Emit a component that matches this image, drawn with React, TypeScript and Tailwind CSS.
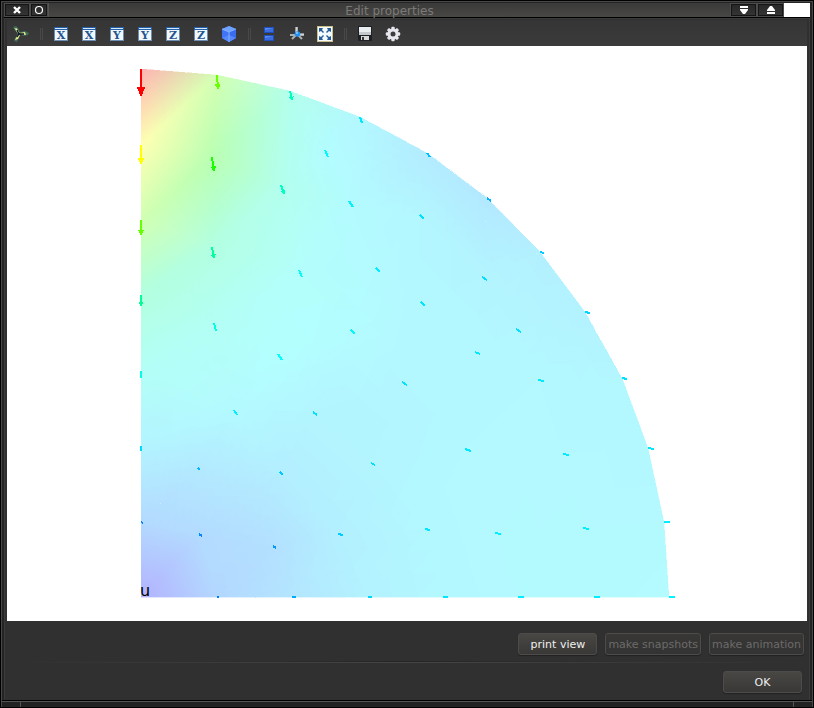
import type { ReactNode } from "react";

type Point = [number, number];
type Triangle = [number, number, number];
type Rgb = [number, number, number];

// Every node: x, y, hue of its magnitude, displacement x, displacement y.
const NODES: [number, number, number, number, number][] = [
  [141, 69, 0, 0, 27], [141, 145, 60, 0, 19], [141, 220, 96, 0, 15], [141, 295, 155, 0, 11],
  [141, 371, 174, 0, 7], [141, 446, 189, 0, 5], [141, 522, 209, 2, 1], [141, 597, 240, 0, 0],
  [217, 75, 95, 1, 14], [290, 91, 165, 2, 9], [360, 117, 186, 2, 6], [427, 153, 195, 3, 4],
  [487, 198, 198, 4, 3], [540, 252, 192, 4, 1], [585, 312, 190, 5, 1], [622, 378, 187, 5, 1],
  [648, 448, 186, 6, 1], [664, 522, 184, 6, 0], [669, 597, 183, 6, 0],
  [217, 597, 211, 2, 0], [292, 597, 200, 4, 0], [368, 597, 190, 4, 0], [443, 597, 186, 5, 0],
  [518, 597, 184, 6, 0], [594, 597, 184, 6, 0],
  [212, 157, 114, 2, 14], [281, 185, 166, 3, 9], [325, 150, 182, 3, 7], [349, 201, 183, 4, 6],
  [212, 247, 157, 2, 11], [299, 270, 177, 3, 7], [376, 268, 184, 4, 4], [420, 215, 187, 4, 4],
  [482, 277, 188, 5, 3], [421, 302, 186, 4, 4], [516, 329, 187, 5, 3], [475, 352, 186, 5, 2],
  [538, 380, 185, 6, 1], [214, 323, 172, 2, 8], [351, 330, 182, 4, 4], [278, 354, 180, 4, 6],
  [234, 410, 184, 3, 5], [313, 412, 188, 4, 3], [198, 468, 197, 2, 2], [280, 472, 193, 3, 3],
  [371, 463, 188, 4, 2], [199, 534, 208, 3, 2], [273, 546, 204, 3, 2], [338, 534, 192, 5, 1],
  [402, 382, 187, 5, 3], [465, 449, 185, 6, 2], [563, 454, 185, 6, 1], [425, 529, 186, 5, 1],
  [495, 533, 184, 6, 1], [583, 528, 184, 6, 1],
];

function hueToRgb(hue: number): Rgb {
  const channel = (n: number) => {
    const k = (n + hue / 60) % 6;
    return 255 * (1 - Math.max(0, Math.min(k, 4 - k, 1)));
  };
  return [channel(5), channel(3), channel(1)];
}

const css = (c: Rgb) => `rgb(${c.map(Math.round).join(",")})`;
const tint = (c: Rgb) => c.map((v) => v * 0.3 + 178.5) as Rgb;

function insideCircumcircle(a: Point, b: Point, c: Point, p: Point) {
  const [ax, ay, bx, by, cx, cy] = [a[0] - p[0], a[1] - p[1], b[0] - p[0], b[1] - p[1], c[0] - p[0], c[1] - p[1]];
  const det =
    (ax * ax + ay * ay) * (bx * cy - cx * by) -
    (bx * bx + by * by) * (ax * cy - cx * ay) +
    (cx * cx + cy * cy) * (ax * by - bx * ay);
  const turn = (b[0] - a[0]) * (c[1] - a[1]) - (b[1] - a[1]) * (c[0] - a[0]);
  return turn > 0 ? det > 0 : det < 0;
}

// Incremental Delaunay triangulation of the nodes.
function triangulate(points: Point[]): Triangle[] {
  const n = points.length;
  const all: Point[] = [...points, [-90000, -80000], [91000, -80000], [400, 120000]];
  let triangles: Triangle[] = [[n, n + 1, n + 2]];
  for (let i = 0; i < n; i++) {
    const edges = new Map<string, [number, number]>();
    triangles = triangles.filter((t) => {
      if (!insideCircumcircle(all[t[0]], all[t[1]], all[t[2]], all[i])) return true;
      for (const [a, b] of [[t[0], t[1]], [t[1], t[2]], [t[2], t[0]]]) {
        const key = a < b ? `${a}-${b}` : `${b}-${a}`;
        if (edges.has(key)) edges.delete(key);
        else edges.set(key, [a, b]);
      }
      return false;
    });
    edges.forEach(([a, b]) => triangles.push([a, b, i]));
  }
  return triangles.filter((t) => t.every((v) => v < n));
}

// Smooth shading: a triangle is cut into cells until each one's colour step is small.
function shadeTriangle(p: Point[], c: Rgb[]): { points: string; fill: string }[] {
  let spread = 0;
  for (let k = 0; k < 3; k++)
    for (let m = 0; m < 3; m++) spread = Math.max(spread, Math.abs(c[0][k] - c[m][k]), Math.abs(c[1][k] - c[2][k]));
  const n = Math.max(2, Math.min(24, Math.ceil(spread / 2)));
  const at = (i: number, j: number): Point => {
    const k = n - i - j;
    return [0, 1].map((d) => (p[0][d] * i + p[1][d] * j + p[2][d] * k) / n) as Point;
  };
  const colour = (i: number, j: number) =>
    css([0, 1, 2].map((d) => (c[0][d] * i + c[1][d] * j + c[2][d] * (n - i - j)) / n) as Rgb);
  const cells: { points: string; fill: string }[] = [];
  for (let i = 0; i < n; i++)
    for (let j = 0; j < n - i; j++) {
      cells.push({ points: [at(i, j), at(i + 1, j), at(i, j + 1)].join(" "), fill: colour(i + 1 / 3, j + 1 / 3) });
      if (i + j < n - 1)
        cells.push({
          points: [at(i + 1, j), at(i + 1, j + 1), at(i, j + 1)].join(" "),
          fill: colour(i + 2 / 3, j + 2 / 3),
        });
    }
  return cells;
}

const POSITIONS = NODES.map(([x, y]) => [x, y] as Point);
const COLOURS = NODES.map((node) => hueToRgb(node[2]));
const CELLS = triangulate(POSITIONS).flatMap((t) =>
  shadeTriangle(t.map((i) => POSITIONS[i]), t.map((i) => tint(COLOURS[i]))),
);

function Arrow({ index }: { index: number }) {
  const [x, y, , dx, dy] = NODES[index];
  const length = Math.hypot(dx, dy);
  if (length === 0) return null;
  const colour = css(COLOURS[index]);
  const [ux, uy] = [dx / length, dy / length];
  const head = length * 0.3;
  const half = length > 9 ? length * 0.1 + 0.7 : 0;
  const [bx, by] = [x + dx - ux * head, y + dy - uy * head];
  return (
    <g fill={colour} stroke={colour}>
      <line x1={x} y1={y} x2={half ? bx : x + dx} y2={half ? by : y + dy} strokeWidth="2" />
      {half > 0 && (
        <polygon
          strokeWidth="1"
          points={`${x + dx},${y + dy} ${bx - uy * half},${by + ux * half} ${bx + uy * half},${by - ux * half}`}
        />
      )}
    </g>
  );
}

function FieldPlot() {
  return (
    <svg viewBox="7 46 800 575" className="block h-auto w-full bg-white" role="img" aria-label="u">
      <g shapeRendering="crispEdges">
        {CELLS.map((cell, i) => (
          <polygon key={i} points={cell.points} fill={cell.fill} stroke={cell.fill} strokeWidth="0.4" />
        ))}
        {NODES.map((_, i) => (
          <Arrow key={i} index={i} />
        ))}
      </g>
      <text x="140" y="596" fontSize="16" fontFamily="DejaVu Sans, sans-serif">
        u
      </text>
    </svg>
  );
}

function Icon({ children }: { children: ReactNode }) {
  return (
    <svg viewBox="0 0 16 16" className="size-4" aria-hidden="true">
      {children}
    </svg>
  );
}

function AxisIcon({ letter }: { letter: string }) {
  return (
    <Icon>
      <rect x="1" y="1" width="14" height="14" fill="#6d8db5" />
      <rect x="1" y="1" width="14" height="3" fill="#245fa8" />
      <rect x="2" y="2" width="12" height="1" fill="#d5e9fa" />
      <rect x="2" y="4" width="12" height="10" fill="#f1f8fb" />
      <text x="8" y="13" fontSize="11" fontWeight="bold" textAnchor="middle" fill="#245591" fontFamily="DejaVu Serif, serif">
        {letter}
      </text>
    </Icon>
  );
}

function AxesIcon() {
  return (
    <Icon>
      <path d="M0 1 3 0 5 2 7 6 12 5 16 7 15 9 11 10 7 9 5 14 4 16 1 15 2 12 5 8Z" fill="#3f6b57" />
      <path d="M1 2 4 2 6 7 5 8Z" fill="#8fb873" />
      <path d="M7 7 12 6 13 9 7 8Z" fill="#e6ea8a" />
      <path d="M5 9 7 9 5 13 2 14 3 12Z" fill="#e6ea8a" />
      <path d="M3 3 6 7" stroke="#eff3a6" strokeWidth="1.400" />
      <path d="M4 4 6 8 11 8M6 8 4 11" fill="none" stroke="#0b1022" strokeWidth="1.300" />
    </Icon>
  );
}

function CubeIcon() {
  return (
    <Icon>
      <path d="M8 0 15 3 15 12 8 16 1 12 1 3Z" fill="#3f74f4" />
      <path d="M8 0 15 3 8 6 1 3Z" fill="#6fa2ff" />
      <path d="M8 6 15 3 15 12 8 16Z" fill="#3a6cf0" />
      <path d="M1 12 8 9 15 12 8 16Z" fill="#5488fb" />
      <path d="M1 3 8 6 8 16M8 6 15 3" fill="none" stroke="#8fbaff" strokeWidth=".8" />
    </Icon>
  );
}

function SplitIcon() {
  return (
    <Icon>
      {[1, 9].map((y) => (
        <g key={y}>
          <rect x="3" y={y} width="10" height="6" fill="#1f4fbe" />
          <rect x="4" y={y + 1} width="8" height="4" fill="#5b8aef" />
          <path d={`M4 ${y + 5}V${y + 3}L12 ${y + 1}V${y + 5}Z`} fill="#3a6ce0" />
        </g>
      ))}
    </Icon>
  );
}

function OriginIcon() {
  return (
    <Icon>
      <path d="M8 1V8L3 13M8 8 13 13M1 9H15" fill="none" stroke="#a9b0b3" strokeWidth="2" />
      <path d="M7 1V7M10 8H15" stroke="#f2f4f4" strokeWidth="1" />
      <circle cx="8.500" cy="8" r="2.800" fill="#2590f0" />
      <circle cx="8" cy="7" r="1" fill="#8ed1ff" />
    </Icon>
  );
}

function FitIcon() {
  return (
    <Icon>
      <rect x="0" y="0" width="16" height="16" fill="#c9c08d" />
      <rect x="1" y="1" width="14" height="14" fill="#f5fafd" />
      <path
        d="M2 2H6L5 4 7 6 6 7 4 5 2 6ZM14 2V6L12 5 10 7 9 6 11 4 10 2ZM2 14V10L4 11 6 9 7 10 5 12 6 14ZM14 14H10L11 12 9 10 10 9 12 11 14 10Z"
        fill="#285d99"
      />
    </Icon>
  );
}

function SaveIcon() {
  return (
    <Icon>
      <path d="M1 0H15V15H2L1 14Z" fill="#1d2126" />
      <path d="M2 1H14V9H2Z" fill="#e8edf0" />
      <path d="M2 6H14V9H2Z" fill="#c3c9cd" />
      <path d="M4 10H12V14H4Z" fill="#d6d9d5" />
      <path d="M5 11H7V14H5Z" fill="#35383a" />
    </Icon>
  );
}

function GearIcon() {
  return (
    <Icon>
      <g fill="#e7e6ef">
        <circle cx="8" cy="8" r="5.500" />
        {[0, 45, 90, 135].map((angle) => (
          <rect key={angle} x="6.300" y="0.800" width="3.400" height="14.400" rx="1" transform={`rotate(${angle} 8 8)`} />
        ))}
      </g>
      <circle cx="8" cy="8" r="2.500" fill="#3b3b3d" />
    </Icon>
  );
}

function Tool({ label, children }: { label: string; children: ReactNode }) {
  return (
    <button type="button" aria-label={label} className="flex h-7 w-7 shrink-0 items-center justify-center">
      {children}
    </button>
  );
}

function Divider() {
  return (
    <span className="flex h-3 w-3 shrink-0 justify-center gap-px">
      <span className="w-px bg-[#484848]" />
      <span className="w-px bg-[#484848]" />
    </span>
  );
}

function Toolbar() {
  return (
    <div className="flex h-[26px] items-center bg-linear-to-b from-[#353535] to-[#3b3b3b] pt-[2px]">
      <Tool label="Axes"><AxesIcon /></Tool>
      <Divider />
      {["X", "X", "Y", "Y", "Z", "Z"].map((letter, i) => (
        <Tool key={i} label={`${i % 2 ? "−" : "+"}${letter} view`}>
          <AxisIcon letter={letter} />
        </Tool>
      ))}
      <Tool label="Isometric view"><CubeIcon /></Tool>
      <Divider />
      <Tool label="Parallel projection"><SplitIcon /></Tool>
      <Tool label="Show origin"><OriginIcon /></Tool>
      <Tool label="Full screen"><FitIcon /></Tool>
      <Divider />
      <Tool label="Save"><SaveIcon /></Tool>
      <Tool label="Settings"><GearIcon /></Tool>
    </div>
  );
}

const frameButton =
  "flex h-[14px] shrink-0 items-center justify-center border border-[#4c4c4c] bg-linear-to-b from-[#272727] to-[#353535] outline outline-[#151515] -outline-offset-2";

function TitleBar() {
  return (
    <header className="flex h-[15px] items-start border-b border-black bg-[#1b1b1b]">
      <button type="button" aria-label="Close" className={`${frameButton} w-[26px]`}>
        <svg viewBox="0 0 8 8" className="size-2" aria-hidden="true">
          <path d="M1 1 7 7M7 1 1 7" stroke="#fff" strokeWidth="2.400" />
        </svg>
      </button>
      <button type="button" aria-label="Pin" className={`${frameButton} w-[18px]`}>
        <svg viewBox="0 0 10 10" className="size-[10px]" aria-hidden="true">
          <circle cx="5" cy="5" r="3.500" fill="none" stroke="#fff" strokeWidth="1.200" />
        </svg>
      </button>
      <h1 className="h-[14px] min-w-0 flex-1 border-l border-[#555] bg-linear-to-b from-[#3a3a3a] to-[#484744] text-center text-[12px] leading-4 text-[#7b7a77]">
        Edit properties
      </h1>
      <button type="button" aria-label="Minimise" className={`${frameButton} w-[27px]`}>
        <svg viewBox="0 0 8 8" className="size-2" aria-hidden="true">
          <path d="M0 0H8V2H0ZM0 3H8V4L5 8H3L0 4Z" fill="#fff" />
        </svg>
      </button>
      <button type="button" aria-label="Maximise" className={`${frameButton} w-[27px]`}>
        <svg viewBox="0 0 8 8" className="size-2" aria-hidden="true">
          <path d="M3 0H5L8 4V5H0V4ZM0 6H8V8H0Z" fill="#fff" />
        </svg>
      </button>
      <span className="h-[14px] w-[26px] shrink-0 bg-white" />
    </header>
  );
}

function DialogButton({ children, disabled, wide }: { children: string; disabled?: boolean; wide?: boolean }) {
  return (
    <button
      type="button"
      disabled={disabled}
      className={`flex h-[22px] min-w-[79px] items-center justify-center rounded-[3px] border border-[#4d4c4a] pt-px text-[11px] leading-4 shadow-[0_1px_1px_#222] ${
        wide ? "px-[2px]" : "px-[11px]"
      } ${
        disabled
          ? "bg-linear-to-b from-[#383736] to-[#333] text-[#6c6b69]"
          : "bg-linear-to-b from-[#484744] to-[#393836] text-[#f0f0ee]"
      }`}
    >
      {children}
    </button>
  );
}

export default function App() {
  return (
    <main className="border border-black bg-[#222] font-['DejaVu_Sans',sans-serif]">
      <div className="border border-b-0 border-[#484848]">
        <div className="border-x-2 border-t border-[#242424]">
          <TitleBar />
          <div className="border border-b-0 border-[#3b3b3b] bg-[#303030] pt-px pr-px pb-[7px] pl-[2px]">
            <div className="pr-px">
              <Toolbar />
              <FieldPlot />
            </div>
            <div className="flex justify-end gap-2 pt-3 pr-1">
              <DialogButton>print view</DialogButton>
              <DialogButton disabled wide>make snapshots</DialogButton>
              <DialogButton disabled wide>make animation</DialogButton>
            </div>
            <div className="mt-[6px] h-[2px] bg-linear-to-r from-transparent via-[#454545] to-transparent">
              <div className="h-px bg-linear-to-r from-transparent via-[#242424] to-transparent" />
            </div>
            <div className="flex justify-end pt-2 pr-[6px]">
              <DialogButton>OK</DialogButton>
            </div>
          </div>
        </div>
        <footer className="flex h-[7px] border-t border-black">
          <div className="w-[19px] border-t border-r border-[#555]" />
          <div className="flex-1 border-t border-[#555]" />
          <div className="w-[19px] border-t border-l border-[#555]" />
        </footer>
      </div>
    </main>
  );
}
